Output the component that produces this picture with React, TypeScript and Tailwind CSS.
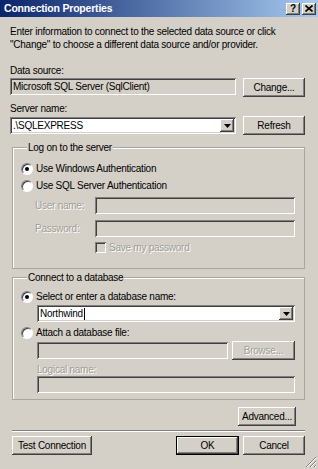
import type { ReactNode } from "react";

const raised =
  "shadow-[inset_-1px_-1px_#404040,inset_1px_1px_#ffffff,inset_-2px_-2px_#808080,inset_2px_2px_#d4d0c8]";
const sunken =
  "shadow-[inset_1px_1px_#808080,inset_-1px_-1px_#ffffff,inset_2px_2px_#404040,inset_-2px_-2px_#d4d0c8]";
const disabledText = "text-[#a19e96] [text-shadow:1px_1px_0_#ffffff]";

function Button({
  children,
  className = "",
  disabled = false,
  isDefault = false,
}: {
  children: ReactNode;
  className?: string;
  disabled?: boolean;
  isDefault?: boolean;
}) {
  return (
    <div
      className={`flex h-[19px] shrink-0 items-center justify-center bg-[#d4d0c8] ${
        isDefault ? "border border-black" : ""
      } ${raised} ${disabled ? disabledText : "text-black"} ${className}`}
    >
      {children}
    </div>
  );
}

function Field({
  children,
  className = "",
  white = false,
}: {
  children?: ReactNode;
  className?: string;
  white?: boolean;
}) {
  return (
    <div
      className={`flex h-[17px] items-center pl-[3px] ${
        white ? "bg-white" : "bg-[#d4d0c8]"
      } ${sunken} ${className}`}
    >
      {children}
    </div>
  );
}

function Combo({ children, className = "" }: { children: ReactNode; className?: string }) {
  return (
    <div className={`flex h-[17px] items-center bg-white pl-[3px] pr-[2px] ${sunken} ${className}`}>
      <div className="flex flex-1 items-center">{children}</div>
      <div className={`flex h-[13px] w-[14px] items-center justify-center bg-[#d4d0c8] ${raised}`}>
        <svg width="7" height="4" viewBox="0 0 7 4">
          <path d="M0 0h7L3.5 4z" fill="#000" />
        </svg>
      </div>
    </div>
  );
}

function Radio({ checked = false, children }: { checked?: boolean; children: ReactNode }) {
  return (
    <div className="flex h-[17px] items-center gap-[3px]">
      <div className="flex h-[12px] w-[12px] items-center justify-center rounded-full border border-b-white border-l-[#808080] border-r-white border-t-[#808080] bg-white shadow-[inset_1px_1px_#404040]">
        {checked && <div className="h-[4px] w-[4px] rounded-full bg-black" />}
      </div>
      <span>{children}</span>
    </div>
  );
}

function Group({ title, children, className = "" }: { title: string; children: ReactNode; className?: string }) {
  return (
    <fieldset
      className={`ml-[2px] border border-[#a9a69e] pl-[8px] pr-[9px] shadow-[inset_1px_1px_#ffffff] ${className}`}
    >
      <legend className="ml-[6px] bg-[#d4d0c8] px-[1px] leading-[13px]">{title}</legend>
      {children}
    </fieldset>
  );
}

export default function App() {
  return (
    <div className="relative flex h-[469px] w-[318px] flex-col overflow-hidden bg-[#d4d0c8] font-['Liberation_Sans',Arial,sans-serif] text-[10px] leading-[13px] tracking-[-0.25px] text-black">
      <div className="flex h-[17px] shrink-0 items-center justify-between bg-[linear-gradient(90deg,#0a246a,#a6caf0)] pl-[4px] pr-[2px]">
        <span className="text-[10.5px] font-bold tracking-[-0.2px] text-white">Connection Properties</span>
        <div className="flex gap-[2px]">
          <div className={`flex h-[12px] w-[14px] items-center justify-center bg-[#d4d0c8] text-[10px] font-bold leading-none ${raised}`}>
            ?
          </div>
          <div className={`flex h-[12px] w-[14px] items-center justify-center bg-[#d4d0c8] ${raised}`}>
            <svg width="8" height="7" viewBox="0 0 8 7">
              <path d="M0.5 0.5l7 6M7.5 0.5l-7 6" stroke="#000" strokeWidth="1.6" />
            </svg>
          </div>
        </div>
      </div>

      <div className="flex flex-col pl-[10px] pr-[13px]">
        <p className="mt-[8px] whitespace-nowrap">
          Enter information to connect to the selected data source or click
          <br />
          "Change" to choose a different data source and/or provider.
        </p>

        <p className="mt-[13px]">Data source:</p>
        <div className="mt-[1px] flex items-start gap-[7px]">
          <Field className="flex-1">Microsoft SQL Server (SqlClient)</Field>
          <Button className="w-[62px]">Change...</Button>
        </div>

        <p className="mt-[5px]">Server name:</p>
        <div className="mt-[1px] flex items-center gap-[7px]">
          <Combo className="flex-1">.\SQLEXPRESS</Combo>
          <Button className="w-[62px]">Refresh</Button>
        </div>

        <Group title="Log on to the server" className="mt-[6px] pb-[14px]">
          <div className="mt-[6px]">
            <Radio checked>Use Windows Authentication</Radio>
            <Radio>Use SQL Server Authentication</Radio>
          </div>
          <div className="mt-[3px] ml-[14px] flex items-center">
            <span className={`w-[60px] ${disabledText}`}>User name:</span>
            <Field className="flex-1" />
          </div>
          <div className="mt-[6px] ml-[14px] flex items-center">
            <span className={`w-[60px] ${disabledText}`}>Password:</span>
            <Field className="flex-1" />
          </div>
          <div className="mt-[4px] ml-[74px] flex h-[13px] items-center gap-[3px]">
            <div className={`h-[11px] w-[11px] bg-[#d4d0c8] ${sunken}`} />
            <span className={disabledText}>Save my password</span>
          </div>
        </Group>

        <Group title="Connect to a database" className="mt-[2px] pb-[6px]">
          <div className="mt-[4px]">
            <Radio checked>Select or enter a database name:</Radio>
          </div>
          <Combo className="ml-[16px]">
            Northwind
            <span className="ml-[1px] h-[12px] w-px bg-black" />
          </Combo>
          <div className="mt-[2px]">
            <Radio>Attach a database file:</Radio>
          </div>
          <div className="ml-[16px] flex items-center gap-[4px]">
            <Field className="flex-1" />
            <Button disabled className="w-[63px]">
              Browse...
            </Button>
          </div>
          <p className={`mt-[3px] ml-[16px] ${disabledText}`}>Logical name:</p>
          <Field className="ml-[16px]" />
        </Group>

        <div className="mt-[7px] mr-[9px] flex justify-end">
          <Button className="w-[58px]">Advanced...</Button>
        </div>

        <div className="mt-[4px] ml-[2px] h-[2px] border-t border-b border-t-[#808080] border-b-white" />

        <div className="mt-[4px] ml-[2px] flex items-center gap-[4px]">
          <Button className="w-[80px]">Test Connection</Button>
          <div className="flex-1" />
          <Button isDefault className="w-[63px]">
            OK
          </Button>
          <Button className="w-[62px]">Cancel</Button>
        </div>
      </div>

      <svg className="absolute bottom-[1px] right-[1px]" width="12" height="12" viewBox="0 0 12 12">
        <path d="M11 1L1 11M11 5L5 11M11 9L9 11" stroke="#808080" strokeWidth="1" />
        <path d="M11 2L2 11M11 6L6 11M11 10L10 11" stroke="#ffffff" strokeWidth="1" />
      </svg>
    </div>
  );
}
